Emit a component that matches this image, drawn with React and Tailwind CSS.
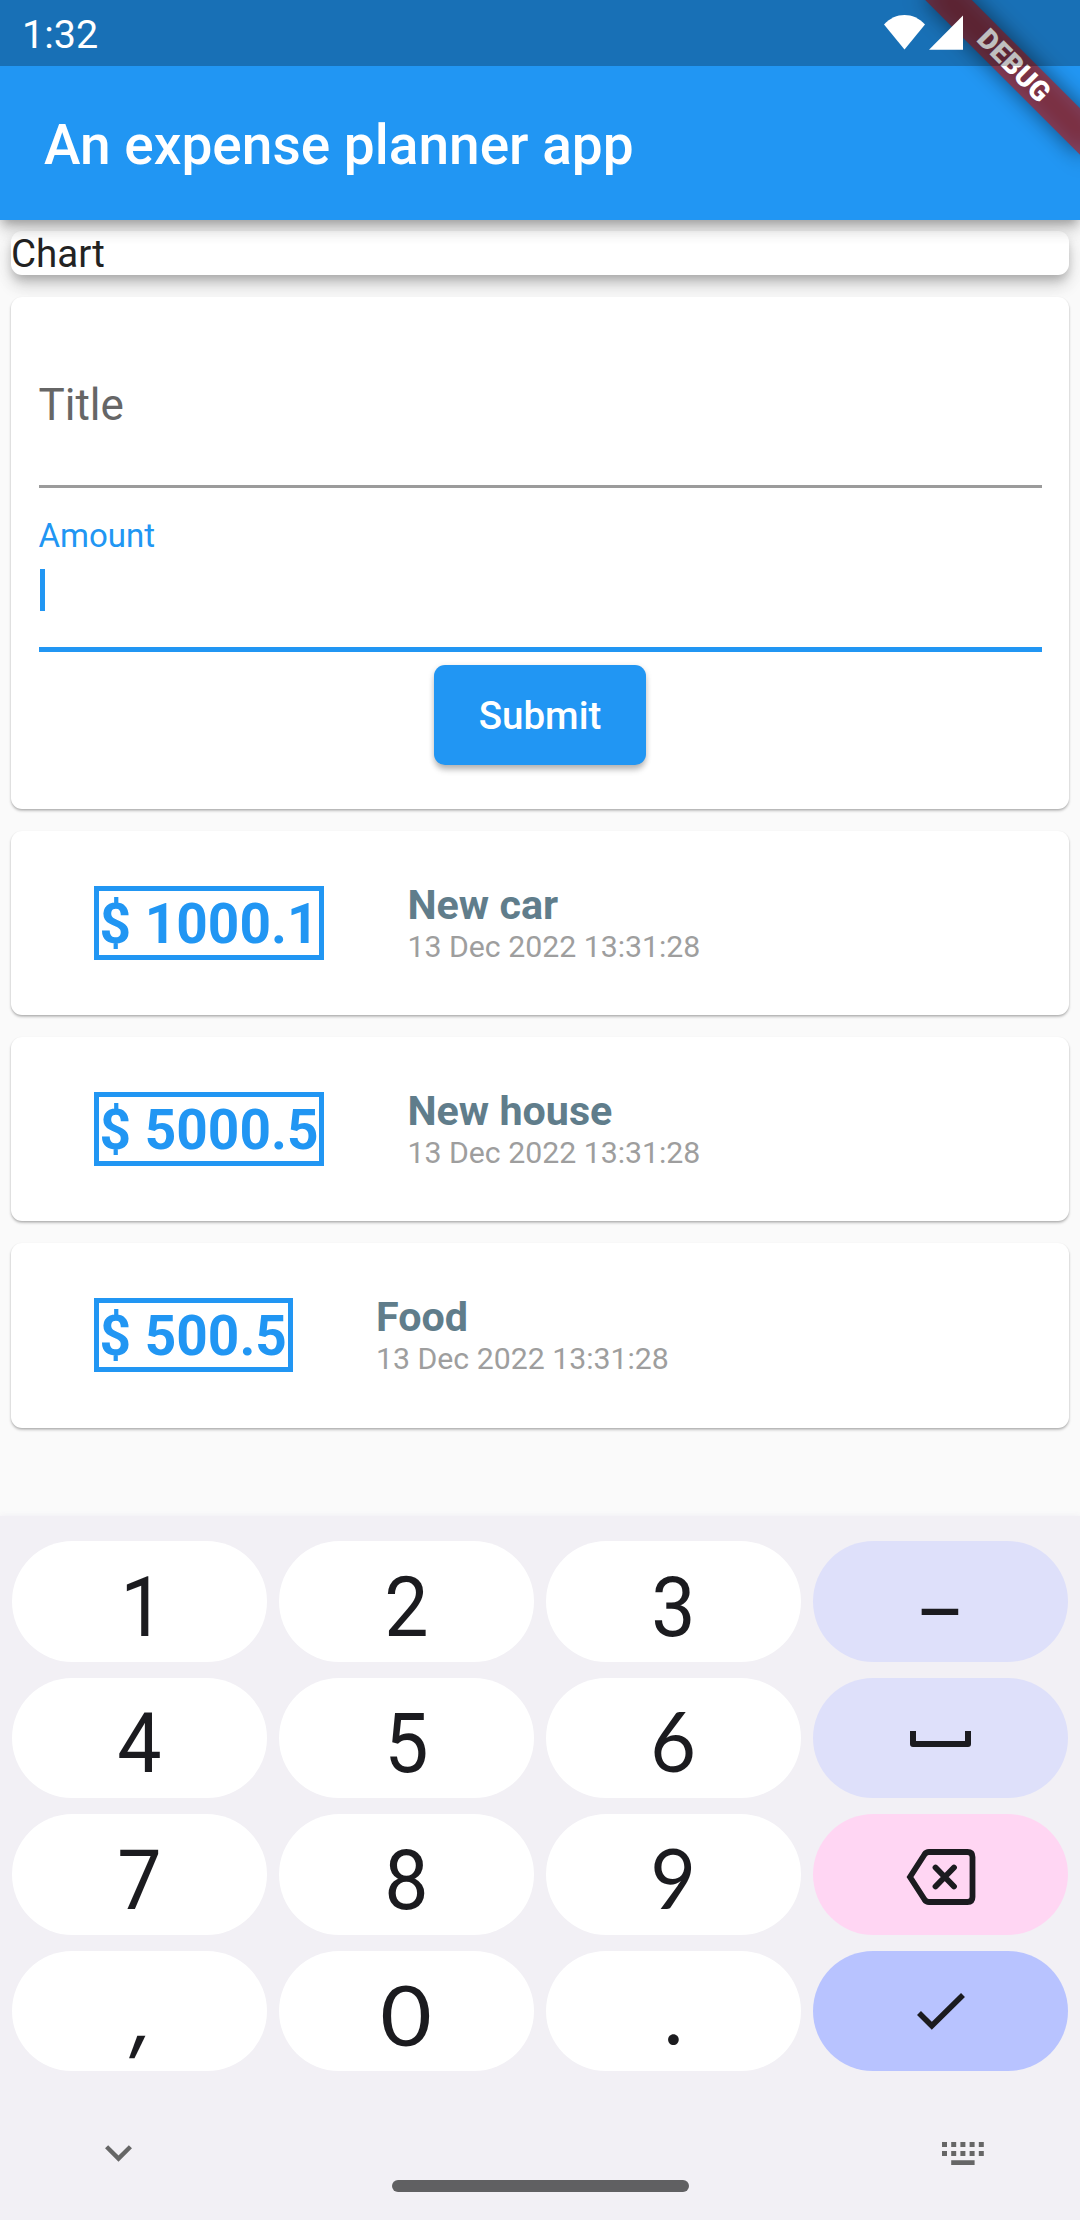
import { clsx } from "clsx";

const expenses = [
  { amount: "1000.1", title: "New car", date: "13 Dec 2022 13:31:28" },
  { amount: "5000.5", title: "New house", date: "13 Dec 2022 13:31:28" },
  { amount: "500.5", title: "Food", date: "13 Dec 2022 13:31:28" },
];

const cardShadow = "shadow-[0_2px_3px_rgba(0,0,0,0.2),0_1px_2px_rgba(0,0,0,0.14)]";

function StatusBar() {
  return (
    <div className="relative z-20 flex h-[66px] items-start justify-between bg-black/25 pl-[22px] pr-[117px]">
      <span className="mt-[11.500px] text-[39.5px] leading-[46px] text-white">1:32</span>
      <svg className="mt-[15px] h-[35px] w-[79px]" viewBox="0 0 79 35" fill="#fff">
        <path d="M0 9.5C6 3 13 0 20.5 0S35 3 41 9.5L20.5 34.5Z" />
        <path d="M45 34.700H79V.5Z" />
      </svg>
    </div>
  );
}

function DebugBanner() {
  return (
    <div className="absolute left-[904px] top-[49px] z-10 h-[33px] w-[220px] rotate-45">
      <div className="absolute inset-0 bg-black/50 blur-[11px]" />
      <div className="relative h-full bg-[#b71c1c]/63 text-center text-[28px] font-black leading-[33px] text-white">
        DEBUG
      </div>
    </div>
  );
}

function Header() {
  return (
    <header className="relative z-10 h-[220px] shrink-0 bg-[#2196f3] shadow-[0_6px_9px_-3px_rgba(0,0,0,0.24),0_11px_14px_rgba(0,0,0,0.12),0_3px_22px_rgba(0,0,0,0.1)]">
      <div className="absolute inset-0 overflow-hidden">
        <DebugBanner />
      </div>
      <StatusBar />
      <h1 className="flex h-[154px] items-center pl-[44px] pt-1 text-[55px] font-medium leading-[64px] text-white">
        An expense planner app
      </h1>
    </header>
  );
}

function EntryForm() {
  return (
    <section className={clsx("h-[511.7px] rounded-[11px] bg-white px-[27.5px] pt-[27.5px]", cardShadow)}>
      <div className="h-[163px] border-b-3 border-[#9b9b9b] pt-[54.5px]">
        <label className="block text-[44px] leading-[52px] text-[#666]">Title</label>
      </div>
      <div className="h-[164px] border-b-[5.5px] border-[#2196f3] pt-[28.5px]">
        <label className="block text-[33px] leading-[39px] text-[#2196f3]">Amount</label>
        <div className="ml-px mt-3.5 h-[42px] w-[5.5px] bg-[#2196f3]" />
      </div>
      <button className="mx-auto mt-[13.5px] block h-[99.5px] w-[212px] rounded-[11px] bg-[#2196f3] text-[38.5px] font-medium leading-[101px] text-white shadow-[0_6px_6px_-1px_rgba(0,0,0,0.2),0_2px_6px_rgba(0,0,0,0.16)]">
        Submit
      </button>
    </section>
  );
}

function ExpenseCard({ amount, title, date }) {
  return (
    <article className={clsx("flex h-[184.3px] items-center rounded-[11px] bg-white px-[82.5px]", cardShadow)}>
      <div className="mr-[83px] border-[5.5px] border-[#2196f3] px-px pt-0.5 text-[55px] font-bold leading-[62px] text-[#2196f3]">
        $ {amount}
      </div>
      <div>
        <div className="text-[41.25px] font-bold leading-[48px] text-[#607d8b]">{title}</div>
        <div className="text-[30.25px] leading-9 text-[#9e9e9e]">{date}</div>
      </div>
    </article>
  );
}

function Key({ className, children }) {
  return (
    <button className={clsx("flex h-[120.6px] items-center justify-center rounded-full text-[#1b1b1f]", className)}>
      {children}
    </button>
  );
}

const roboto = "translate-y-[6px] text-[83px] scale-x-95";
const lato = "translate-y-[3px] font-['Lato',sans-serif] text-[83px]";
const inter = "translate-y-[4px] font-['Inter',sans-serif] text-[81px]";

function Glyph({ className, children }) {
  return <span className={clsx("block leading-none", className)}>{children}</span>;
}

function Keyboard() {
  return (
    <section className="flex h-[704px] flex-col bg-[#f2f0f5] pt-[25px] shadow-[0_-1px_5px_#f2f0f5]">
      <div className="grid grid-cols-4 gap-x-3 gap-y-[16px] px-3">
        <Key className="bg-white"><Glyph className={clsx(roboto, "translate-x-[3px]")}>1</Glyph></Key>
        <Key className="bg-white"><Glyph className={roboto}>2</Glyph></Key>
        <Key className="bg-white"><Glyph className={roboto}>3</Glyph></Key>
        <Key className="bg-[#dee0fa]">
          <Glyph className="translate-y-[11.500px] scale-x-90 text-[83px]">–</Glyph>
        </Key>
        <Key className="bg-white"><Glyph className={roboto}>4</Glyph></Key>
        <Key className="bg-white"><Glyph className={roboto}>5</Glyph></Key>
        <Key className="bg-white"><Glyph className={clsx(lato, "scale-x-95")}>6</Glyph></Key>
        <Key className="bg-[#dee0fa]">
          <svg className="mt-[3px] h-4 w-[61px]" viewBox="0 0 61 16" fill="none" stroke="currentColor" strokeWidth="6" strokeLinejoin="round">
            <path d="M3 0V13H58V0" />
          </svg>
        </Key>
        <Key className="bg-white"><Glyph className={roboto}>7</Glyph></Key>
        <Key className="bg-white"><Glyph className={roboto}>8</Glyph></Key>
        <Key className="bg-white"><Glyph className={clsx(lato, "scale-x-95")}>9</Glyph></Key>
        <Key className="bg-[#ffd6f3]">
          <svg className="mt-[5px] h-14 w-[70px]" viewBox="0 0 70 56" fill="none" stroke="currentColor" strokeWidth="5.8">
            <path d="M4 28 18.5 5.5Q20.200 3 23 3H61.500Q66.500 3 66.500 8V48Q66.500 53 61.500 53H23Q20.200 53 18.500 50.500Z" />
            <path d="M29.500 18.500 48 37.500M48 18.500 29.500 37.500" strokeLinecap="round" />
          </svg>
        </Key>
        <Key className="bg-white"><Glyph className={clsx(inter, "-skew-x-12 translate-x-[5px]")}>,</Glyph></Key>
        <Key className="bg-white"><Glyph className={clsx(lato, "scale-x-107")}>0</Glyph></Key>
        <Key className="bg-white"><Glyph className={inter}>.</Glyph></Key>
        <Key className="bg-[#b8c3ff]">
          <svg className="h-[37px] w-12" viewBox="0 0 48 37" fill="none" stroke="currentColor" strokeWidth="5.6">
            <path d="M2 20 14.800 32.800 46 2" />
          </svg>
        </Key>
      </div>
      <div className="mt-[71px] flex h-6 items-start justify-between pl-[105px] pr-[96px]">
        <svg className="mt-[3px] h-[17px] w-[27px]" viewBox="0 0 27 17" fill="none" stroke="#666" strokeWidth="4.4">
          <path d="M1.600 1.700 13.500 13.600 25.400 1.700" />
        </svg>
        <svg className="h-[23px] w-[42px]" viewBox="0 0 42 23" fill="#666">
          <path d="M0 0h5v5H0zM9.200 0h5v5h-5zM18.400 0h5v5h-5zM27.600 0h5v5h-5zM36.800 0h5v5h-5zM0 9h5v5H0zM9.200 9h5v5h-5zM18.400 9h5v5h-5zM27.600 9h5v5h-5zM36.800 9h5v5h-5zM9.200 18.200h23.400V23H9.200z" />
        </svg>
      </div>
      <div className="mx-auto mt-[14px] h-3 w-[297px] rounded-full bg-[#606062]" />
    </section>
  );
}

export default function App() {
  return (
    <div className="flex h-[2220px] w-[1080px] flex-col overflow-hidden bg-[#fafafa] font-['Roboto',sans-serif]">
      <Header />
      <main className="flex flex-1 flex-col gap-[22px] px-[11px] pt-[11px]">
        <section className="h-11 rounded-[11px] bg-white text-[38.5px] leading-[45px] text-[#222] shadow-[0_6px_10px_-2px_rgba(0,0,0,0.2),0_12px_16px_rgba(0,0,0,0.12),0_3px_22px_rgba(0,0,0,0.08)]">
          Chart
        </section>
        <EntryForm />
        {expenses.map((e) => (
          <ExpenseCard key={e.title} {...e} />
        ))}
      </main>
      <Keyboard />
    </div>
  );
}
